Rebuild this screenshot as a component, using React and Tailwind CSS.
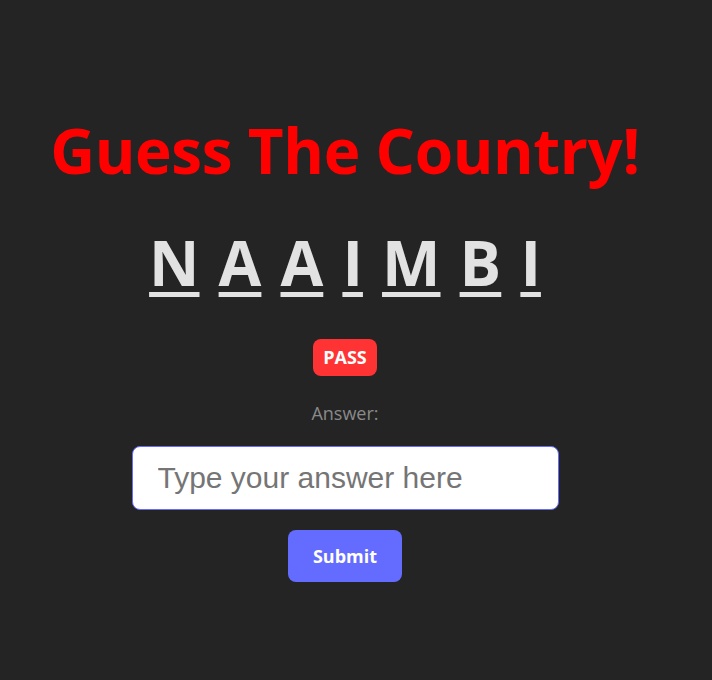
export default function App() {
	const letters = ['N', 'A', 'A', 'I', 'M', 'B', 'I'];

	return (
		<div className="min-h-[680px] bg-[#242424] font-['Open_Sans',sans-serif]">
			<div className="w-[690px] flex flex-col items-center pt-[108px]">
				<h1 className="text-[62px] leading-[84px] font-bold text-[#ff0000] tracking-[-0.4px]">
					Guess The Country!
				</h1>

				<div className="mt-[28px] text-[62px] leading-[84px] font-bold text-[#e2e2e2] whitespace-pre [word-spacing:3px]">
					{letters.map((l, i) => (
						<span key={i}>
							<span className="underline decoration-[5px] underline-offset-[6px]">{l}</span>
							{i < letters.length - 1 ? ' ' : ''}
						</span>
					))}
				</div>

				<button className="mt-[35px] h-[37px] w-[64px] rounded-[8px] bg-[#ff3333] text-white text-[18px] font-bold">
					PASS
				</button>

				<p className="mt-[24px] text-[18px] text-[#8a8a8a]">Answer:</p>

				<input
					type="text"
					placeholder="Type your answer here"
					className="mt-[19px] w-[427px] h-[64px] rounded-[8px] bg-white border border-[#646cff] pl-[25px] text-[30px] font-['Liberation_Sans',Arial,sans-serif] text-black placeholder:text-[#757575] outline-none"
				/>

				<button className="mt-[20px] w-[114px] h-[52px] rounded-[8px] bg-[#646cff] text-white text-[18px] font-bold">
					Submit
				</button>
			</div>
		</div>
	);
}
